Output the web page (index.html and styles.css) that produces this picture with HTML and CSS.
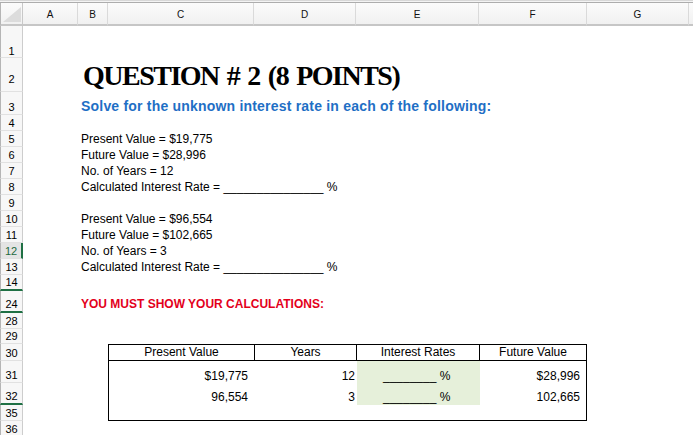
FILE: index.html
```html
<!DOCTYPE html>
<html>
<head>
<meta charset="utf-8">
<link rel="stylesheet" href="styles.css">
</head>
<body>
<div class="topbar"></div>
<div class="sheet">
  <div class="ch corner"><svg class="corner-tri" width="21" height="21" viewBox="0 0 21 21"><polygon points="2,19 20,4 20,19" fill="#dcdcdc"/></svg></div>
  <div class="ch">A</div>
  <div class="ch">B</div>
  <div class="ch">C</div>
  <div class="ch">D</div>
  <div class="ch">E</div>
  <div class="ch">F</div>
  <div class="ch">G</div>
  <div class="ch ch-last"></div>

  <div class="rh r1 rh-top">1</div>
  <div class="rh r2 rh-tall">2</div>
  <div class="rh r3">3</div>
  <div class="rh r4">4</div>
  <div class="rh r5">5</div>
  <div class="rh r6">6</div>
  <div class="rh r7">7</div>
  <div class="rh r8">8</div>
  <div class="rh r9">9</div>
  <div class="rh r10">10</div>
  <div class="rh r11">11</div>
  <div class="rh r12 rh-sel">12</div>
  <div class="rh r13">13</div>
  <div class="rh r14 rh-hid">14</div>
  <div class="rh r24 rh-hid">24</div>
  <div class="rh r28">28</div>
  <div class="rh r29">29</div>
  <div class="rh r30">30</div>
  <div class="rh r31">31</div>
  <div class="rh r32 rh-hid">32</div>
  <div class="rh r35">35</div>
  <div class="rh r36">36</div>

  <div class="txt title r2">QUESTION # 2 (8 POINTS)</div>
  <div class="txt subtitle r3">Solve for the unknown interest rate in each of the following:</div>
  <div class="txt r5">Present Value = $19,775</div>
  <div class="txt r6">Future Value = $28,996</div>
  <div class="txt r7">No. of Years = 12</div>
  <div class="txt r8">Calculated Interest Rate = _______________ %</div>
  <div class="txt r10">Present Value = $96,554</div>
  <div class="txt r11">Future Value = $102,665</div>
  <div class="txt r12">No. of Years = 3</div>
  <div class="txt r13">Calculated Interest Rate = _______________ %</div>
  <div class="txt warn r24">YOU MUST SHOW YOUR CALCULATIONS:</div>

  <div class="tbl">
    <div class="thead">
      <div class="th">Present Value</div>
      <div class="th">Years</div>
      <div class="th">Interest Rates</div>
      <div class="th th-last">Future Value</div>
    </div>
    <div class="trow trow-a">
      <div class="td td-pv">$19,775</div>
      <div class="td td-yr">12</div>
      <div class="td td-ir">________ %</div>
      <div class="td td-fv">$28,996</div>
    </div>
    <div class="trow trow-b">
      <div class="td td-pv">96,554</div>
      <div class="td td-yr">3</div>
      <div class="td td-ir">________ %</div>
      <div class="td td-fv">102,665</div>
    </div>
    <div class="trow trow-c"></div>
  </div>
</div>
</body>
</html>
```

FILE: styles.css
```css
* { box-sizing: border-box; }

html, body {
  margin: 0;
  padding: 0;
  background: #ffffff;
  overflow: hidden;
}

body {
  width: 693px;
  height: 435px;
  font-family: "Liberation Sans", Arial, sans-serif;
  color: #000;
}

.topbar {
  height: 3px;
  border-top: 1px solid #d8d8d8;
  border-bottom: 1px solid #adadad;
  background: #f4f4f4;
}

.sheet {
  display: grid;
  grid-template-columns: 23px 55px 30px 146px 102px 123px 108px 102px 1fr;
  grid-template-rows: 23px 32px 34px 23px repeat(10, 16px) 16px 22px 16px 15px 17px 22px 22px 16px 16px;
}

/* column headers */
.ch {
  grid-row: 1;
  background: linear-gradient(#fbfbfb, #f1f1f1);
  border-right: 1px solid #dadada;
  border-bottom: 2px solid #c6c6c6;
  font-size: 10px;
  line-height: 10px;
  display: flex;
  align-items: center;
  justify-content: center;
  padding-top: 2px;
  color: #111;
}
.ch-last { border-right: none; }
.corner {
  border-left: 1px solid #b5b5b5;
  border-right: 1px solid #c8c8c8;
  padding: 0;
  align-items: flex-start;
  justify-content: flex-start;
}
.corner-tri { display: block; }

/* row headers */
.rh {
  grid-column: 1;
  background: #f7f7f7;
  border-left: 1px solid #b5b5b5;
  border-right: 1px solid #cdcdcd;
  border-bottom: 1px solid #e1e1e1;
  font-size: 11px;
  line-height: 11px;
  display: flex;
  align-items: flex-end;
  justify-content: center;
  padding-bottom: 1px;
}
.rh-top { padding-bottom: 0; }
.rh-tall { padding-bottom: 6px; }
.rh-sel {
  background: #e4e4e4;
  color: #1e6b41;
  border-right: 2px solid #1f7044;
}
.rh-hid { border-bottom: 2px solid #1f7044; }

.r1 { grid-row: 2; }
.r2 { grid-row: 3; }
.r3 { grid-row: 4; }
.r4 { grid-row: 5; }
.r5 { grid-row: 6; }
.r6 { grid-row: 7; }
.r7 { grid-row: 8; }
.r8 { grid-row: 9; }
.r9 { grid-row: 10; }
.r10 { grid-row: 11; }
.r11 { grid-row: 12; }
.r12 { grid-row: 13; }
.r13 { grid-row: 14; }
.r14 { grid-row: 15; }
.r24 { grid-row: 16; }
.r28 { grid-row: 17; }
.r29 { grid-row: 18; }
.r30 { grid-row: 19; }
.r31 { grid-row: 20; }
.r32 { grid-row: 21; }
.r35 { grid-row: 22; }
.r36 { grid-row: 23; }

/* cell text */
.txt {
  grid-column: 3 / 10;
  display: flex;
  align-items: flex-end;
  white-space: pre;
  font-size: 12px;
  line-height: 12px;
  padding-left: 3px;
  padding-bottom: 2px;
}
.title {
  font-family: "Liberation Serif", "Times New Roman", serif;
  font-weight: bold;
  font-size: 28px;
  line-height: 28px;
  letter-spacing: -1.5px;
  word-spacing: 2.5px;
  padding-left: 5px;
  padding-bottom: 2px;
}
.subtitle {
  font-weight: bold;
  font-size: 14px;
  line-height: 14px;
  letter-spacing: 0.2px;
  color: #1f6fc5;
  padding-bottom: 2px;
}
.warn {
  font-weight: bold;
  color: #e3001b;
  padding-bottom: 3px;
}

/* table */
.tbl {
  grid-column: 4 / 8;
  grid-row: 19 / 23;
  border: 1px solid #000;
  display: flex;
  flex-direction: column;
  font-size: 12px;
}
.thead, .trow {
  display: grid;
  grid-template-columns: 146px 102px 123px 106px;
}
.thead { height: 16px; }
.th {
  border-bottom: 1px solid #000;
  border-right: 1px solid #000;
  text-align: center;
  line-height: 15px;
  white-space: nowrap;
}
.th-last { border-right: none; }
.trow-a { height: 22px; }
.trow-b { height: 22px; }
.trow-c { height: 15px; }
.td {
  display: flex;
  align-items: flex-end;
  justify-content: flex-end;
  line-height: 12px;
  white-space: pre;
}
.trow-a .td { padding-bottom: 1px; }
.trow-b .td { padding-bottom: 2px; }
.td-pv { padding-right: 7px; }
.td-yr { padding-right: 2px; }
.td-ir {
  background: #e6f0da;
  justify-content: flex-start;
  padding-left: 26px;
}
.td-fv { padding-right: 6px; }
```
